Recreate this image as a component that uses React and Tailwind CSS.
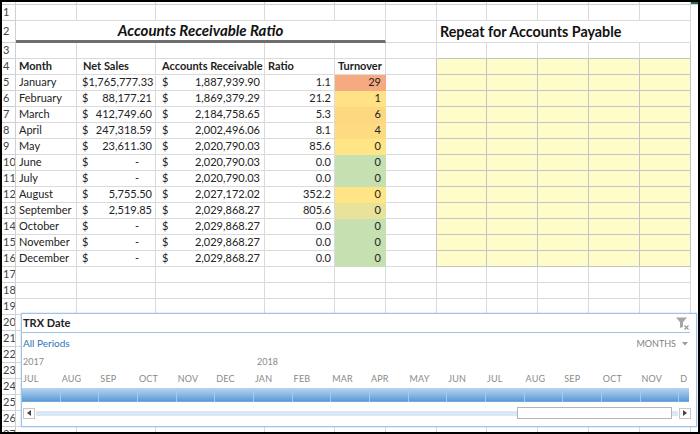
import clsx from 'clsx';

const COLS =
  'grid grid-cols-[14px_61px_79px_109px_70px_51px_51px_50px_51px_51px_51px_51px_7px] grid-rows-[3px_16px_22px_16px_16px_repeat(23,16px)]';

const DATA = [
  ['January', '1,765,777.33', '1,887,939.90', '1.1', '29', 'bg-[#f6aa80] border-[#f6aa80]'],
  ['February', '88,177.21', '1,869,379.29', '21.2', '1', 'bg-[#ffe286] border-[#ffe286]'],
  ['March', '412,749.60', '2,184,758.65', '5.3', '6', 'bg-[#fed881] border-[#fed881]'],
  ['April', '247,318.59', '2,002,496.06', '8.1', '4', 'bg-[#fedb82] border-[#fedb82]'],
  ['May', '23,611.30', '2,020,790.03', '85.6', '0', 'bg-[#ffe585] border-[#ffe585]'],
  ['June', '-', '2,020,790.03', '0.0', '0', 'bg-[#c6e0b2] border-[#c6e0b2]'],
  ['July', '-', '2,020,790.03', '0.0', '0', 'bg-[#c6e0b2] border-[#c6e0b2]'],
  ['August', '5,755.50', '2,027,172.02', '352.2', '0', 'bg-[#ffe585] border-[#ffe585]'],
  ['September', '2,519.85', '2,029,868.27', '805.6', '0', 'bg-[#e9e29b] border-[#e9e29b]'],
  ['October', '-', '2,029,868.27', '0.0', '0', 'bg-[#c6e0b2] border-[#c6e0b2]'],
  ['November', '-', '2,029,868.27', '0.0', '0', 'bg-[#c6e0b2] border-[#c6e0b2]'],
  ['December', '-', '2,029,868.27', '0.0', '0', 'bg-[#c6e0b2] border-[#c6e0b2]'],
];

const MONTHS = ['JUL', 'AUG', 'SEP', 'OCT', 'NOV', 'DEC', 'JAN', 'FEB', 'MAR', 'APR', 'MAY', 'JUN', 'JUL', 'AUG', 'SEP', 'OCT', 'NOV', 'D'];

function C({ line = 'border-[#dadada]', className, children }) {
  return (
    <div className={clsx('flex items-center overflow-hidden whitespace-nowrap border-r border-b', line, className)}>
      {children}
    </div>
  );
}

// the sliver past column K: no gridlines
function Edge() {
  return <div className="bg-white" />;
}

function Hdr({ n }) {
  return (
    <C line="border-[#d0d0d0]" className="pl-[1px] text-[11px] text-[#444]">
      {n}
    </C>
  );
}

// G..K yellow block + edge
function Right({ row }) {
  const yellow = row >= 4 && row <= 16;
  return (
    <>
      {[0, 1, 2, 3, 4].map((i) => (
        <C
          key={i}
          line={yellow || row === 3 ? 'border-[#c4c4c4]' : 'border-[#dadada]'}
          className={clsx(yellow && 'bg-[#fefdc9]', row === 3 && i < 4 && 'border-r-[#dadada]')}
        />
      ))}
      <Edge />
    </>
  );
}

function FColumn({ row }) {
  const inBlock = row >= 4 && row <= 16;
  return <C line={inBlock ? 'border-[#c4c4c4]' : 'border-[#dadada]'} className={inBlock ? 'border-b-[#dadada]' : ''} />;
}

function FilterClear() {
  return (
    <svg width="15" height="15" viewBox="0 0 15 15">
      <path d="M1 1.5h11L8 6.3v4.4L5 12V6.3Z" fill="#a6a6a6" />
      <path d="M9.5 9.5l4 4M13.5 9.5l-4 4" stroke="#9a9a9a" strokeWidth="1.2" />
    </svg>
  );
}

function Slicer() {
  return (
    <div className="absolute left-[19px] top-[311px] h-[114px] w-[676px] border border-[#9dc3e6] bg-white shadow-[0_0_2px_rgba(91,155,213,0.45)]">
      <div className="mr-[6px] flex h-[19px] items-center justify-between border-b border-[#9dc3e6] pl-[1px]">
        <span className="text-[11px] font-bold text-[#222]">TRX Date</span>
        <FilterClear />
      </div>
      <div className="flex h-[21px] items-center justify-between pl-[1px] pr-[8px]">
        <span className="text-[10px] text-[#2e75b6]">All Periods</span>
        <span className="flex items-center gap-[6px] text-[9px] text-[#7f7f7f]">
          MONTHS
          <svg width="6" height="4" viewBox="0 0 6 4">
            <path d="M0 0h6L3 3.5Z" fill="#9a9a9a" />
          </svg>
        </span>
      </div>
      <div className="flex h-[16px] w-[667px] items-center overflow-hidden text-[9px] text-[#8a8a8a]">
        <span className="w-[232px] shrink-0 pl-[1px]">2017</span>
        <span className="pl-[3px]">2018</span>
      </div>
      <div className="flex h-[17px] w-[667px] items-center overflow-hidden">
        {MONTHS.map((m, i) => (
          <span key={i} className="w-[38.67px] shrink-0 pl-[1px] text-[9px] tracking-[0.2px] text-[#8a8a8a]">
            {m}
          </span>
        ))}
      </div>
      <div className="mt-[1px] flex h-[14px] w-[667px] overflow-hidden bg-[linear-gradient(to_bottom,#b9d5f0,#8dbae6_45%,#5f9cd6_90%,#7fb0e0)]">
        {MONTHS.map((m, i) => (
          <div key={i} className="h-full w-[38.67px] shrink-0 border-r border-[#a9c9ea]" />
        ))}
      </div>
      <div className="mt-[5px] flex h-[12px] w-[669px] items-center pl-[1px]">
        <div className="flex h-[11px] w-[12px] items-center justify-center border border-[#c8c8c8] bg-white">
          <svg width="4" height="6" viewBox="0 0 4 6">
            <path d="M4 0v6L0 3Z" fill="#444" />
          </svg>
        </div>
        <div className="relative mx-[1px] flex h-full flex-1 items-center">
          <div className="h-[5px] w-full bg-[#dae7f4]" />
          <div className="absolute left-[481px] top-0 h-[12px] w-[155px] border border-[#b5b5b5] bg-white" />
        </div>
        <div className="flex h-[11px] w-[12px] items-center justify-center border border-[#c8c8c8] bg-white">
          <svg width="4" height="6" viewBox="0 0 4 6">
            <path d="M0 0v6L4 3Z" fill="#444" />
          </svg>
        </div>
      </div>
    </div>
  );
}

export default function App() {
  return (
    <div className="relative h-[434px] w-[700px] overflow-hidden border-2 border-black bg-white font-['Lato',sans-serif] text-[11px] text-[#222]">
      <div className={COLS}>
        {/* column header remnant */}
        {Array.from({ length: 12 }).map((_, i) => (
          <div key={i} className="border-r border-b border-[#cfcfcf]" />
        ))}
        <div className="border-b border-[#cfcfcf]">
          <div className="h-[2px] bg-[#217346]" />
        </div>

        {/* row 1 */}
        <Hdr n={1} />
        {Array.from({ length: 11 }).map((_, i) => (
          <C key={i} />
        ))}
        <Edge />

        {/* row 2 */}
        <Hdr n={2} />
        <C className="col-span-5 justify-center border-b-[3px] border-b-[#6e6e6e] text-[15px] font-bold italic text-[#111]">
          Accounts Receivable Ratio
        </C>
        <C />
        <C className="col-span-5 pl-[3px] text-[14.3px] font-bold text-[#111]">Repeat for Accounts Payable</C>
        <Edge />

        {/* row 3 */}
        <Hdr n={3} />
        {Array.from({ length: 6 }).map((_, i) => (
          <C key={i} />
        ))}
        <Right row={3} />

        {/* row 4 */}
        <Hdr n={4} />
        <C className="pl-[3px] font-bold">Month</C>
        <C className="pl-[6px] font-bold">Net Sales</C>
        <C className="pl-[6px] font-bold">Accounts Receivable</C>
        <C className="pl-[3px] font-bold">Ratio</C>
        <C className="pl-[3px] font-bold">Turnover</C>
        <FColumn row={4} />
        <Right row={4} />

        {DATA.map(([m, ns, ar, ratio, turn, color], i) => (
          <div key={m} className="contents">
            <Hdr n={i + 5} />
            <C className="pl-[3px]">{m}</C>
            <C className="justify-between pl-[5px] pr-[3px]">
              <span>$</span>
              <span className={ns === '-' ? 'pr-[13px]' : ''}>{ns}</span>
            </C>
            <C className="justify-between pl-[6px] pr-[4px]">
              <span>$</span>
              <span>{ar}</span>
            </C>
            <C className="justify-end pr-[3px]">{ratio}</C>
            <C line={color} className="justify-end pr-[4px]">
              {turn}
            </C>
            <FColumn row={i + 5} />
            <Right row={i + 5} />
          </div>
        ))}

        {Array.from({ length: 11 }).map((_, r) => (
          <div key={r} className="contents">
            <Hdr n={r + 17} />
            {Array.from({ length: 11 }).map((_, i) => (
              <C key={i} />
            ))}
            <Edge />
          </div>
        ))}
      </div>
      <Slicer />
    </div>
  );
}
